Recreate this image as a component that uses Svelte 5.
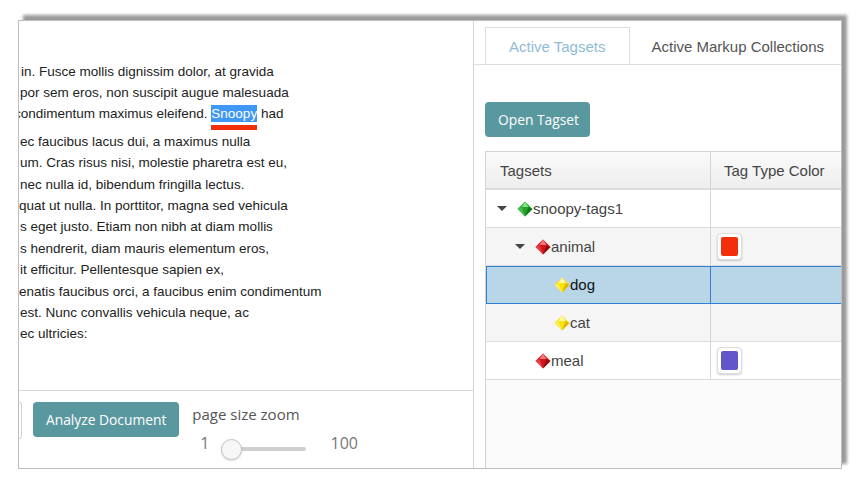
<script lang="ts">
  // x = how far the line sits from the pane's left edge (text is scrolled under it)
  const lines = [
    { text: 'in. Fusce mollis dignissim dolor, at gravida', x: 2 },
    { text: 'por sem eros, non suscipit augue malesuada', x: 1 },
    { text: 'condimentum maximus eleifend. ', x: -5, snoopy: true },
    { text: 'ec faucibus lacus dui, a maximus nulla', x: 1 },
    { text: 'um. Cras risus nisi, molestie pharetra est eu,', x: 1 },
    { text: 'nec nulla id, bibendum fringilla lectus.', x: 1 },
    { text: 'quat ut nulla. In porttitor, magna sed vehicula', x: 0 },
    { text: 's eget justo. Etiam non nibh at diam mollis', x: 1 },
    { text: 's hendrerit, diam mauris elementum eros,', x: 1 },
    { text: 'it efficitur. Pellentesque sapien ex,', x: 1 },
    { text: 'enatis faucibus orci, a faucibus enim condimentum', x: 0 },
    { text: 'est. Nunc convallis vehicula neque, ac', x: 1 },
    { text: 'ec ultricies:', x: 1 }
  ];

  const rows = [
    { name: 'snoopy-tags1', depth: 0, gem: 'green', caret: true, color: '', alt: false, selected: false },
    { name: 'animal', depth: 1, gem: 'red', caret: true, color: '#f32e0a', alt: true, selected: false },
    { name: 'dog', depth: 2, gem: 'yellow', caret: false, color: '', alt: false, selected: true },
    { name: 'cat', depth: 2, gem: 'yellow', caret: false, color: '', alt: true, selected: false },
    { name: 'meal', depth: 1, gem: 'red', caret: false, color: '#6157cb', alt: false, selected: false }
  ];

  const gems: Record<string, string[]> = {
    green: ['#23a32b', '#7fe07f', '#0f7a1c'],
    red: ['#d2151c', '#f4777a', '#8f0d12'],
    yellow: ['#fbe20f', '#fffaa8', '#dcb800']
  };
</script>

<div class="window">
  <section class="doc">
    <div class="pages">
      {#each lines as line}
        <div class="line" class:tall={line.snoopy} style="margin-left: {line.x}px">
          {line.text}{#if line.snoopy}<span class="hit">Snoopy</span> had{/if}
        </div>
      {/each}
    </div>
    <div class="toolbar">
      <span class="stub"></span>
      <button class="btn">Analyze Document</button>
      <div class="zoom">
        <div class="zoom-label">page size zoom</div>
        <div class="slider-row">
          <span class="min">1</span>
          <span class="slider"><span class="thumb"></span></span>
          <span class="max">100</span>
        </div>
      </div>
    </div>
  </section>

  <section class="side">
    <div class="tabs">
      <div class="tab active">Active Tagsets</div>
      <div class="tab">Active Markup Collections</div>
    </div>
    <div class="panel">
      <button class="btn open">Open Tagset</button>
      <div class="table">
        <div class="row head">
          <div class="cell">Tagsets</div>
          <div class="cell">Tag Type Color</div>
        </div>
        {#each rows as row}
          <div class="row" class:alt={row.alt} class:selected={row.selected}>
            <div class="cell name depth{row.depth}">
              {#if row.caret}<span class="caret"></span>{/if}
              <svg class="gem" width="16" height="16" viewBox="0 0 16 16">
                <polygon points="8,0.5 15.5,8 8,15.5 0.5,8" fill={gems[row.gem][0]} />
                <polygon points="8,0.5 11.5,6 4.5,6" fill={gems[row.gem][1]} />
                <polygon points="0.5,8 4.5,6 8,15.5" fill={gems[row.gem][1]} opacity="0.45" />
                <polygon points="15.5,8 11.5,6 8,15.5" fill={gems[row.gem][2]} />
              </svg>
              <span>{row.name}</span>
            </div>
            <div class="cell swatch-cell">
              {#if row.color}
                <span class="swatch"><span class="fill" style="background: {row.color}"></span></span>
              {/if}
            </div>
          </div>
        {/each}
      </div>
    </div>
  </section>
</div>

<style>
  :global(body) {
    background: #fff;
  }

  .window {
    display: flex;
    width: 824px;
    height: 449px;
    margin: 20px 0 0 18px;
    box-sizing: border-box;
    border: 1px solid #bdbdbd;
    background: #fff;
    overflow: hidden;
    box-shadow: 5px -5px 3px #9a9a9a;
    font-family: "Liberation Sans", Arial, sans-serif;
  }

  .doc {
    flex: 0 0 454px;
    display: flex;
    flex-direction: column;
    border-right: 1px solid #d4d4d4;
    overflow: hidden;
  }

  .pages {
    flex: 1;
    padding-top: 39.5px;
    font-size: 13.5px;
    line-height: 21.4px;
    color: #222;
    white-space: nowrap;
    overflow: hidden;
  }

  .line.tall {
    height: 27.5px;
  }

  .hit {
    display: inline-block;
    height: 17px;
    line-height: 17px;
    background: #3f97f6;
    color: #fff;
    box-shadow: 0 3px 0 #fff, 0 8px 0 #f32e0a;
  }

  .toolbar {
    flex: 0 0 78px;
    box-sizing: border-box;
    border-top: 1px solid #d8d8d8;
    display: flex;
    align-items: flex-start;
    padding-top: 11px;
    font-family: "Open Sans", sans-serif;
  }

  .stub {
    width: 2px;
    height: 35px;
    margin-right: 11px;
    border: 1px solid #d4d4d4;
    border-left: 0;
    border-radius: 0 3px 3px 0;
  }

  .btn {
    border: 0;
    border-radius: 4px;
    background: #5a989f;
    color: #fff;
    font-family: "Open Sans", sans-serif;
    font-size: 13.8px;
    height: 35px;
    padding: 0 13px;
  }

  .zoom {
    margin-left: 13px;
    color: #555;
  }

  .zoom-label {
    font-size: 15px;
    line-height: 24px;
  }

  .slider-row {
    display: flex;
    align-items: center;
    font-size: 16px;
    color: #777;
    padding-left: 8px;
    height: 34px;
  }

  .slider {
    position: relative;
    display: block;
    width: 85px;
    height: 4px;
    margin: 12px 24px 0 12px;
    background: #cfcfcf;
    border-radius: 2px;
  }

  .thumb {
    position: absolute;
    left: 0;
    top: -8px;
    width: 19px;
    height: 19px;
    border-radius: 50%;
    background: #f7f7f7;
    border: 1px solid #c4c4c4;
    box-shadow: 0 1px 2px rgba(0, 0, 0, 0.15);
  }

  .side {
    flex: 1;
    min-width: 0;
    display: flex;
    flex-direction: column;
    overflow: hidden;
    background: #fff;
  }

  .tabs {
    display: flex;
    flex: 0 0 43px;
    box-sizing: border-box;
    padding: 6px 0 0 11px;
    border-bottom: 1px solid #dedede;
  }

  .tab {
    height: 36px;
    line-height: 40px;
    padding: 0 21px;
    font-size: 15px;
    color: #555;
    white-space: nowrap;
  }

  .tab.active {
    box-sizing: border-box;
    height: 37px;
    line-height: 38px;
    color: #8fbcd6;
    background: #fff;
    border: 1px solid #dedede;
    border-bottom: 0;
    padding: 0 24px 0 23px;
  }

  .panel {
    padding: 37px 0 0 11px;
    flex: 1;
  }

  .btn.open {
    display: block;
    padding: 0 11px 0 13px;
  }

  .table {
    width: 500px;
    height: 330px;
    margin-top: 14px;
    box-sizing: border-box;
    border-left: 1px solid #d4d4d4;
    border-top: 1px solid #d4d4d4;
    background: #fafafa;
    font-size: 15px;
    color: #444;
  }

  .row {
    display: grid;
    grid-template-columns: 225px 1fr;
    height: 38px;
    box-sizing: border-box;
    border-bottom: 1px solid #dcdcdc;
    background: #fff;
  }

  .row.head {
    background: linear-gradient(#fafafa, #eeeeee);
    border-bottom: 2px solid #dcdcdc;
  }

  .row.head .cell + .cell {
    padding-left: 13px;
  }

  .row.alt {
    background: #f5f5f5;
  }

  .row.selected {
    background: #b9d5e8;
    color: #111;
    outline: 1px solid #2f80d0;
    outline-offset: -1px;
  }

  .cell {
    display: flex;
    align-items: center;
    padding-left: 14px;
    border-right: 1px solid #d4d4d4;
  }

  .row.selected .cell {
    border-right-color: #2f80d0;
  }

  .cell.name {
    position: relative;
    padding-left: 31px;
  }

  .cell.depth1 {
    padding-left: 49px;
  }

  .cell.depth2 {
    padding-left: 68px;
  }

  .caret {
    position: absolute;
    margin-left: -20px;
    width: 0;
    height: 0;
    border-left: 5px solid transparent;
    border-right: 5px solid transparent;
    border-top: 5px solid #444;
  }

  .gem {
    flex: none;
  }

  .swatch-cell {
    padding-left: 6px;
  }

  .swatch {
    display: block;
    width: 25px;
    height: 27px;
    box-sizing: border-box;
    padding: 3px;
    background: #fff;
    border: 1px solid #ddd;
    border-radius: 4px;
    box-shadow: 0 1px 2px rgba(0, 0, 0, 0.2);
  }

  .fill {
    display: block;
    width: 100%;
    height: 100%;
    border-radius: 2px;
  }
</style>
